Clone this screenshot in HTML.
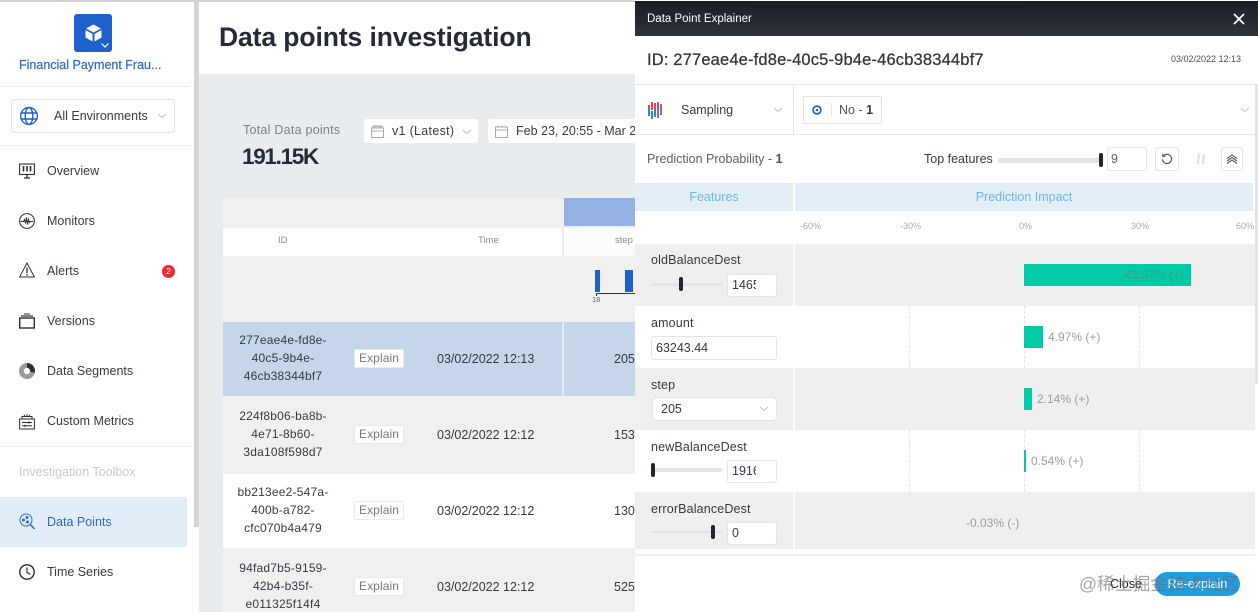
<!DOCTYPE html>
<html><head><meta charset="utf-8">
<style>
html,body{margin:0;padding:0;width:1258px;height:612px;overflow:hidden;background:#fff}
body{font-family:"Liberation Sans","Noto Sans CJK SC",sans-serif;position:relative}
.b,.t,svg{position:absolute}
.b{box-sizing:border-box}
.t{white-space:nowrap;color:#343a46;font-size:12.5px;line-height:16px}
.nav{left:47px;font-size:12.5px;color:#343a46}
.c{text-align:center}
.id{left:223px;width:120px;line-height:18px;font-size:12px;letter-spacing:.2px}
.ex{box-sizing:border-box;position:absolute;left:354px;width:50px;height:19px;background:#fff;border:1px solid #e9e9e9;border-radius:2px;color:#74777c;font-size:12px;line-height:17px;text-align:center;letter-spacing:.1px}
.ip{box-sizing:border-box;position:absolute;background:#fff;border:1px solid #e4e4e4;border-radius:3px;font-size:12.5px;color:#343a46;line-height:21px;padding-left:4px;overflow:hidden;white-space:nowrap}
.tr{position:absolute;height:3px;background:#e4e4e4;border-radius:2px}
.th{position:absolute;width:4px;height:14px;background:#23262b;border-radius:3px}
.pct{color:#9b9da0;font-size:12px}
.ax{color:#a8a8a8;font-size:9px;top:218px}
.ds{position:absolute;width:0;border-left:1px dashed #e4e4e4}
.bar{position:absolute;background:#00cba7}
.lb{left:651px;font-size:12.5px;color:#343a46;letter-spacing:.15px}
</style></head><body>
<!-- top line -->
<div class="b" style="left:0;top:0;width:635px;height:2px;background:#d2d2d2"></div>

<!-- sidebar -->
<div class="b" style="left:194px;top:2px;width:5px;height:525px;background:#d5d5d5"></div>
<div class="b" style="left:74px;top:14px;width:38px;height:38px;background:#1e60cc;border-radius:3px"></div>
<svg style="left:83px;top:23px" width="21" height="20" viewBox="0 0 21 20"><path d="M10.5 1.5 18 5.5 10.5 9.5 3 5.5Z M2.5 7 9.5 11 9.5 18.5 2.5 14.5Z M18.5 7 11.5 11 11.5 18.5 18.5 14.5Z" fill="#fff"/></svg>
<svg style="left:100px;top:42px" width="10" height="7" viewBox="0 0 10 7"><path d="M1.5 1.5 5 5 8.5 1.5" fill="none" stroke="#fff" stroke-width="1.2"/></svg>
<div class="t" style="left:19px;top:57px;color:#2d68c4;font-size:12.5px;-webkit-text-stroke:.2px #2d68c4">Financial Payment Frau...</div>
<div class="b" style="left:0;top:86px;width:190px;height:1px;background:#eeeeee"></div>
<div class="b" style="left:11px;top:99px;width:164px;height:34px;border:1px solid #e2e2e2;border-radius:4px;background:#fff"></div>
<svg style="left:19px;top:106px" width="20" height="20" viewBox="0 0 20 20" fill="none" stroke="#1e60cc" stroke-width="1.4"><circle cx="10" cy="10" r="8.4"/><ellipse cx="10" cy="10" rx="3.8" ry="8.4"/><path d="M2 7h16M2 13h16"/></svg>
<div class="t" style="left:54px;top:108px;font-size:12.5px">All Environments</div>
<svg style="left:157px;top:113px" width="10" height="6" viewBox="0 0 10 6"><path d="M1 1 5 4.5 9 1" fill="none" stroke="#bbb" stroke-width="1"/></svg>
<div class="b" style="left:0;top:145px;width:192px;height:1px;background:#eeeeee"></div>

<svg style="left:19px;top:163px" width="16" height="16" viewBox="0 0 16 16" fill="none" stroke="#2b2e33" stroke-width="1.1"><rect x="0.6" y="1" width="14.8" height="10.5"/><path d="M4.5 3v5.5M8 3v5.5M11.5 3v5.5" stroke-width="1.6"/><path d="M8 11.5v3.5M5 15h6" stroke-width="1.3"/></svg>
<div class="t nav" style="top:163px">Overview</div>
<svg style="left:19px;top:213px" width="16" height="16" viewBox="0 0 16 16" fill="none" stroke="#2b2e33" stroke-width="1"><circle cx="8" cy="8" r="7.4"/><path d="M1.5 8.5h3l1-2 1 4 1-6 1 7 1-5 1 3 .7-1h3"/></svg>
<div class="t nav" style="top:213px">Monitors</div>
<svg style="left:19px;top:262px" width="16" height="16" viewBox="0 0 16 16" fill="none" stroke="#2b2e33" stroke-width="1"><path d="M8 1 15.4 15H.6Z"/><path d="M8 5.5v5.5M8 12v1.6" stroke-width="1.3"/></svg>
<div class="t nav" style="top:263px">Alerts</div>
<div class="b c" style="left:162px;top:265px;width:13px;height:13px;border-radius:50%;background:#ee2b35;color:#fff;font-size:8.5px;line-height:13px">2</div>
<svg style="left:19px;top:313px" width="16" height="16" viewBox="0 0 16 16" fill="none" stroke="#2b2e33"><rect x="0.7" y="5" width="14.6" height="10" stroke-width="1.4"/><path d="M2 3h12" stroke-width="1.2"/><path d="M5 1h6" stroke-width="1"/></svg>
<div class="t nav" style="top:313px">Versions</div>
<svg style="left:19px;top:363px" width="16" height="16" viewBox="0 0 16 16"><circle cx="8" cy="8" r="8" fill="#9a9a9a"/><circle cx="8" cy="8" r="3.2" fill="#fff"/><path d="M8 0a8 8 0 0 1 7.8 9.8L11 8.5A3.2 3.2 0 0 0 8 4.8Z" fill="#2d2f33"/></svg>
<div class="t nav" style="top:363px">Data Segments</div>
<svg style="left:19px;top:413px" width="16" height="17" viewBox="0 0 16 17" fill="none" stroke="#2b2e33" stroke-width="1"><rect x="0.6" y="6" width="14.8" height="10"/><path d="M3 6V3.5h10V6M8 1v2.5M5 1.6l1 1.9M11 1.6l-1 1.9"/><path d="M3 9.5h10M3 12.8h10"/><path d="M10 8.3v2.4M6 11.6v2.4"/></svg>
<div class="t nav" style="top:413px">Custom Metrics</div>
<div class="b" style="left:0;top:446px;width:192px;height:1px;background:#eeeeee"></div>
<div class="t" style="left:19px;top:464px;color:#c9cacc;font-size:12.5px">Investigation Toolbox</div>
<div class="b" style="left:0;top:497px;width:187px;height:50px;background:#e3edf8"></div>
<svg style="left:19px;top:513px" width="16" height="17" viewBox="0 0 16 17" fill="none" stroke="#2d68c4" stroke-width="1"><circle cx="7" cy="7" r="6"/><path d="M11.3 11.5 15.5 16" stroke-width="1.5"/><circle cx="4.5" cy="7" r="1" fill="#2d68c4"/><circle cx="8" cy="4.5" r="1" fill="#2d68c4"/><circle cx="8.5" cy="9" r="1" fill="#2d68c4"/></svg>
<div class="t nav" style="top:514px;color:#2d68c4">Data Points</div>
<svg style="left:19px;top:564px" width="16" height="16" viewBox="0 0 16 16" fill="none" stroke="#2b2e33" stroke-width="1.4"><circle cx="8" cy="8" r="7.2"/><path d="M8 3.5V8.5l3.2 1.8" stroke-width="1.2"/></svg>
<div class="t nav" style="top:564px">Time Series</div>

<!-- main -->
<div class="b" style="left:199px;top:2px;width:436px;height:72px;background:#fff"></div>
<div class="b" style="left:199px;top:74px;width:436px;height:538px;background:#e9ecef"></div>
<div class="t" style="left:219px;top:20px;font-size:26.5px;line-height:34px;font-weight:700;color:#252b36;letter-spacing:-.1px">Data points investigation</div>
<div class="t" style="left:243px;top:122px;color:#7c8288;font-size:12.5px;letter-spacing:.25px">Total Data points</div>
<div class="t" style="left:242px;top:143px;font-size:22.5px;line-height:28px;font-weight:700;color:#252b36;letter-spacing:-1.3px">191.15K</div>
<div class="b" style="left:364px;top:119px;width:114px;height:24px;background:#fff;border-radius:3px"></div>
<svg style="left:371px;top:125px" width="13" height="13" viewBox="0 0 13 13" fill="none" stroke="#aaa"><rect x=".5" y="3" width="12" height="9.5"/><path d="M2 1h9v2H2z" fill="#ccc"/><path d="M.5 6h12"/></svg>
<div class="t" style="left:392px;top:123px;font-size:12.5px;letter-spacing:.3px">v1 (Latest)</div>
<svg style="left:462px;top:129px" width="10" height="6" viewBox="0 0 10 6"><path d="M1 1 5 4.5 9 1" fill="none" stroke="#bbb"/></svg>
<div class="b" style="left:488px;top:119px;width:147px;height:24px;background:#fff;border-radius:3px 0 0 3px"></div>
<svg style="left:495px;top:125px" width="13" height="13" viewBox="0 0 13 13" fill="none" stroke="#aaa"><rect x=".5" y="2" width="12" height="10.5"/><path d="M.5 5h12M3 .5v2M6.5.5v2M10 .5v2"/></svg>
<div class="t" style="left:516px;top:123px;font-size:12.5px;width:119px;overflow:hidden">Feb 23, 20:55 - Mar 2</div>

<!-- table -->
<div class="b" style="left:223px;top:198px;width:412px;height:30px;background:#eff0f1"></div>
<div class="b" style="left:564px;top:198px;width:71px;height:28px;background:#93b1e3"></div>
<div class="b" style="left:223px;top:228px;width:339px;height:28px;background:#fff"></div>
<div class="b" style="left:564px;top:228px;width:71px;height:28px;background:#fbfbfb"></div>
<div class="t" style="left:278px;top:233px;font-size:9.5px;color:#8a8c92">ID</div>
<div class="t" style="left:478px;top:233px;font-size:9.5px;color:#8a8c92">Time</div>
<div class="t" style="left:615px;top:233px;font-size:9.5px;color:#8a8c92">step</div>
<div class="b" style="left:223px;top:256px;width:412px;height:66px;background:#f0f0f0"></div>
<div class="b" style="left:595px;top:270px;width:5px;height:22px;background:#1e60cc"></div>
<div class="b" style="left:625px;top:270px;width:8px;height:22px;background:#1e60cc"></div>
<div class="b" style="left:596px;top:293px;width:39px;height:1px;background:#333"></div>
<div class="b" style="left:596px;top:293px;width:1px;height:3px;background:#333"></div>
<div class="t" style="left:592px;top:294px;font-size:7.5px;line-height:12px;color:#666">18</div>

<div class="b" style="left:223px;top:322px;width:412px;height:74px;background:#c5d5ea"></div>
<div class="b" style="left:562px;top:322px;width:2px;height:74px;background:#e2eaf4"></div>
<div class="b" style="left:223px;top:396px;width:412px;height:78px;background:#f0f0f0"></div>
<div class="b" style="left:223px;top:474px;width:412px;height:74px;background:#fff"></div>
<div class="b" style="left:223px;top:548px;width:412px;height:64px;background:#f0f0f0"></div>

<div class="t c id" style="top:331px">277eae4e-fd8e-<br>40c5-9b4e-<br>46cb38344bf7</div>
<div class="t c id" style="top:407px">224f8b06-ba8b-<br>4e71-8b60-<br>3da108f598d7</div>
<div class="t c id" style="top:483px">bb213ee2-547a-<br>400b-a782-<br>cfc070b4a479</div>
<div class="t c id" style="top:559px">94fad7b5-9159-<br>42b4-b35f-<br>e011325f14f4</div>
<div class="ex" style="top:349px">Explain</div>
<div class="ex" style="top:425px">Explain</div>
<div class="ex" style="top:501px">Explain</div>
<div class="ex" style="top:577px">Explain</div>
<div class="t" style="left:437px;top:351px;font-size:12.5px">03/02/2022 12:13</div>
<div class="t" style="left:437px;top:427px;font-size:12.5px">03/02/2022 12:12</div>
<div class="t" style="left:437px;top:503px;font-size:12.5px">03/02/2022 12:12</div>
<div class="t" style="left:437px;top:579px;font-size:12.5px">03/02/2022 12:12</div>
<div class="t" style="left:614px;top:351px;font-size:12.5px">205</div>
<div class="t" style="left:614px;top:427px;font-size:12.5px">153</div>
<div class="t" style="left:614px;top:503px;font-size:12.5px">130</div>
<div class="t" style="left:614px;top:579px;font-size:12.5px">525</div>

<!-- panel -->
<div class="b" style="left:635px;top:0;width:623px;height:612px;background:#fff"></div>
<div class="b" style="left:635px;top:1px;width:623px;height:35px;background:linear-gradient(#1b1d24,#2e323b)"></div>
<div class="t" style="left:647px;top:11px;color:#fff;font-size:11.5px">Data Point Explainer</div>
<svg style="left:1233px;top:13px" width="12" height="12" viewBox="0 0 12 12"><path d="M1 1 11 11M11 1 1 11" stroke="#fff" stroke-width="1.8"/></svg>
<div class="t" style="left:647px;top:50px;font-size:16.5px;line-height:20px;color:#30343c;letter-spacing:.16px;-webkit-text-stroke:.25px #30343c">ID: 277eae4e-fd8e-40c5-9b4e-46cb38344bf7</div>
<div class="t" style="left:1171px;top:51px;font-size:9px;color:#4a4d53">03/02/2022 12:13</div>
<div class="b" style="left:635px;top:84px;width:623px;height:1px;background:#e8e8e8"></div>
<svg style="left:647px;top:101px" width="18" height="18" viewBox="0 0 18 18" stroke-width="2"><path d="M2 4v5M5 1v8M8 2v7M11 1v7" stroke="#e04848"/><path d="M2 9v6M5 10v8M8 9v7" stroke="#2a86d8"/><path d="M11 8v9M14 3v11" stroke="#8a63c6"/></svg>
<div class="t" style="left:681px;top:102px;font-size:12.5px">Sampling</div>
<svg style="left:773px;top:107px" width="10" height="6" viewBox="0 0 10 6"><path d="M1 1 5 4.5 9 1" fill="none" stroke="#bbb"/></svg>
<div class="b" style="left:793px;top:84px;width:1px;height:50px;background:#e8e8e8"></div>
<div class="b" style="left:803px;top:96px;width:79px;height:28px;border:1px solid #e2e2e2;border-radius:2px"></div>
<svg style="left:812px;top:105px" width="10" height="10" viewBox="0 0 10 10"><circle cx="5" cy="5" r="3.9" fill="none" stroke="#1e60cc" stroke-width="1.7"/><circle cx="5" cy="5" r="1.3" fill="#1e60cc"/></svg>
<div class="b" style="left:831px;top:103px;width:1px;height:14px;background:#e6e6e6"></div>
<div class="t" style="left:839px;top:102px;font-size:12.5px;color:#50545a">No - <b style="color:#343a46">1</b></div>
<svg style="left:1240px;top:107px" width="10" height="6" viewBox="0 0 10 6"><path d="M1 1 5 4.5 9 1" fill="none" stroke="#c4c4c4"/></svg>
<div class="b" style="left:635px;top:134px;width:620px;height:1px;background:#e8e8e8"></div>
<div class="t" style="left:647px;top:151px;font-size:12.5px;color:#5a5e64">Prediction Probability - <b style="color:#50545a">1</b></div>
<div class="t" style="left:924px;top:151px;font-size:12.5px">Top features</div>
<div class="tr" style="left:998px;top:158px;width:103px;height:5px"></div>
<div class="th" style="left:1099px;top:153px"></div>
<div class="ip" style="left:1107px;top:147px;width:40px;height:24px;color:#5d6065;line-height:22px;padding-left:3px">9</div>
<div class="b" style="left:1155px;top:147px;width:24px;height:24px;border:1px solid #e4e4e4;border-radius:4px"></div>
<svg style="left:1161px;top:153px" width="12" height="12" viewBox="0 0 12 12" fill="none" stroke="#55585c" stroke-width="1.2"><path d="M2.4 3A4.6 4.6 0 1 1 1.4 6.3"/><path d="M1.8 .8V3.3H4.4"/></svg>
<svg style="left:1195px;top:153px" width="12" height="12" viewBox="0 0 12 12" fill="none" stroke="#dcdcdc" stroke-width="1.8"><path d="M4 1 3 11M9 1 8 11"/></svg>
<div class="b" style="left:1221px;top:147px;width:22px;height:24px;border:1px solid #e4e4e4;border-radius:4px"></div>
<svg style="left:1226px;top:154px" width="12" height="10" viewBox="0 0 12 10" fill="none" stroke="#55585c" stroke-width="1.1"><path d="M1 4.5 6 1 11 4.5M1 7 6 3.5 11 7M1 9.5 6 6 11 9.5"/></svg>
<div class="b" style="left:1255px;top:84px;width:3px;height:300px;background:#e3e3e3"></div>

<div class="b" style="left:635px;top:183px;width:158px;height:28px;background:#e3eef7"></div>
<div class="b" style="left:795px;top:183px;width:458px;height:28px;background:#e3eef7"></div>
<div class="t c" style="left:635px;width:158px;top:189px;font-size:12.5px;color:#6cb8de">Features</div>
<div class="t c" style="left:795px;width:458px;top:189px;font-size:12.5px;color:#6cb8de">Prediction Impact</div>
<div class="t ax" style="left:800px">-60%</div>
<div class="t ax" style="left:900px">-30%</div>
<div class="t ax" style="left:1019px">0%</div>
<div class="t ax" style="left:1131px">30%</div>
<div class="t ax" style="left:1236px">60%</div>

<!-- rows -->
<div class="b" style="left:635px;top:244px;width:620px;height:62px;background:#efefef"></div>
<div class="b" style="left:635px;top:368px;width:620px;height:62px;background:#efefef"></div>
<div class="b" style="left:635px;top:492px;width:620px;height:57px;background:#efefef"></div>
<div class="b" style="left:793px;top:244px;width:2px;height:305px;background:rgba(255,255,255,.8)"></div>
<div class="ds" style="left:909px;top:306px;height:62px"></div>
<div class="ds" style="left:909px;top:430px;height:62px"></div>
<div class="ds" style="left:1024px;top:306px;height:62px"></div>
<div class="ds" style="left:1024px;top:430px;height:62px"></div>
<div class="ds" style="left:1139px;top:306px;height:62px"></div>
<div class="ds" style="left:1139px;top:430px;height:62px"></div>

<div class="t lb" style="top:252px">oldBalanceDest</div>
<div class="tr" style="left:651px;top:283px;width:71px"></div>
<div class="th" style="left:679px;top:277px"></div>
<div class="ip" style="left:727px;top:274px;width:50px;height:23px"><span style="display:block;width:24px;overflow:hidden">14650</span></div>
<div class="bar" style="left:1024px;top:264px;width:167px;height:22px"></div>
<div class="t pct" style="left:1125px;top:267px;color:#3f9f8c">43.57% (+)</div>

<div class="t lb" style="top:315px">amount</div>
<div class="ip" style="left:651px;top:336px;width:126px;height:24px;line-height:22px">63243.44</div>
<div class="bar" style="left:1024px;top:326px;width:19px;height:22px"></div>
<div class="t pct" style="left:1048px;top:329px">4.97% (+)</div>

<div class="t lb" style="top:377px">step</div>
<div class="ip" style="left:652px;top:397px;width:125px;height:24px;line-height:22px;padding-left:8px;border-radius:4px">205</div>
<svg style="left:759px;top:406px" width="10" height="6" viewBox="0 0 10 6"><path d="M1 1 5 4.5 9 1" fill="none" stroke="#bbb"/></svg>
<div class="bar" style="left:1024px;top:388px;width:8px;height:22px"></div>
<div class="t pct" style="left:1037px;top:391px">2.14% (+)</div>

<div class="t lb" style="top:439px">newBalanceDest</div>
<div class="tr" style="left:651px;top:468px;width:71px;height:4px"></div>
<div class="th" style="left:651px;top:463px"></div>
<div class="ip" style="left:727px;top:460px;width:50px;height:23px"><span style="display:block;width:24px;overflow:hidden">19166</span></div>
<div class="bar" style="left:1024px;top:450px;width:2px;height:22px"></div>
<div class="t pct" style="left:1031px;top:453px">0.54% (+)</div>

<div class="t lb" style="top:501px">errorBalanceDest</div>
<div class="tr" style="left:651px;top:531px;width:71px;height:2px"></div>
<div class="th" style="left:711px;top:525px"></div>
<div class="ip" style="left:727px;top:522px;width:50px;height:23px">0</div>
<div class="t pct" style="left:966px;top:515px">-0.03% (-)</div>

<!-- footer -->
<div class="b" style="left:635px;top:554px;width:620px;height:2px;background:#f0f0f0"></div>
<div class="b" style="left:1155px;top:572px;width:85px;height:24px;background:#1d9fe6;border-radius:12px"></div>
<div class="t" style="left:1110px;top:576px;font-size:12.5px;color:#23262b">Close</div>
<div class="t c" style="left:1155px;width:85px;top:576px;font-size:12.5px;color:#fff">Re-explain</div>
<div class="t" style="left:1079px;top:572px;font-size:17.8px;line-height:24px;color:rgba(110,110,110,.62)">@稀土掘金技术社区</div>
</body></html>
